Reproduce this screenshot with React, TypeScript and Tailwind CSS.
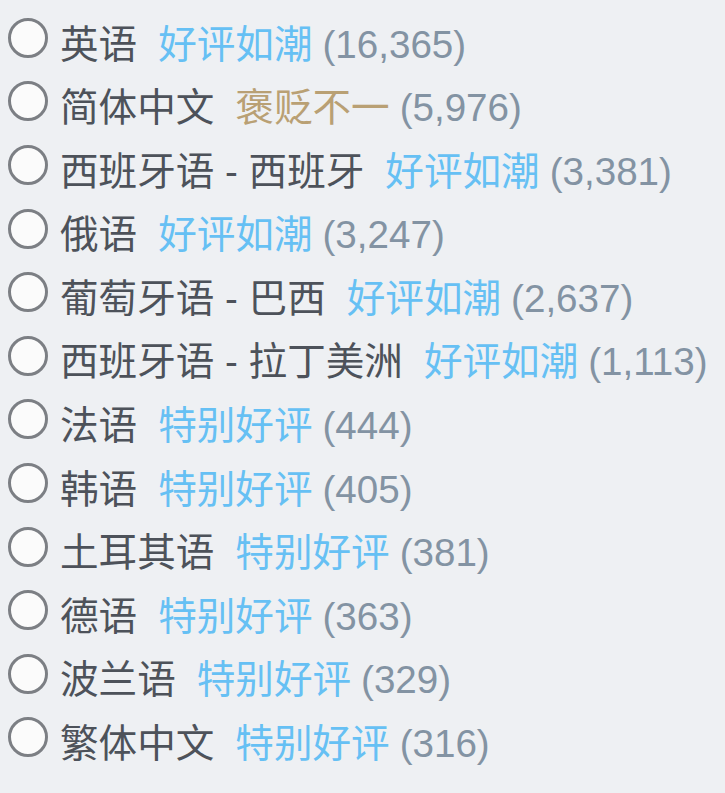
const rows: { lang: string; rating: string; tone: "pos" | "mixed"; count: string }[] = [
  { lang: "英语", rating: "好评如潮", tone: "pos", count: "16,365" },
  { lang: "简体中文", rating: "褒贬不一", tone: "mixed", count: "5,976" },
  { lang: "西班牙语 - 西班牙", rating: "好评如潮", tone: "pos", count: "3,381" },
  { lang: "俄语", rating: "好评如潮", tone: "pos", count: "3,247" },
  { lang: "葡萄牙语 - 巴西", rating: "好评如潮", tone: "pos", count: "2,637" },
  { lang: "西班牙语 - 拉丁美洲", rating: "好评如潮", tone: "pos", count: "1,113" },
  { lang: "法语", rating: "特别好评", tone: "pos", count: "444" },
  { lang: "韩语", rating: "特别好评", tone: "pos", count: "405" },
  { lang: "土耳其语", rating: "特别好评", tone: "pos", count: "381" },
  { lang: "德语", rating: "特别好评", tone: "pos", count: "363" },
  { lang: "波兰语", rating: "特别好评", tone: "pos", count: "329" },
  { lang: "繁体中文", rating: "特别好评", tone: "pos", count: "316" },
];

export default function App() {
  return (
    <div
      className="min-h-[793px] w-[725px] bg-[#eef0f3] pt-[13px]"
      style={{ fontFamily: '"Liberation Sans", "Noto Sans CJK SC", Arial, sans-serif' }}
    >
      {rows.map((r) => (
        <label key={r.lang} className="flex h-[63.6px] items-center whitespace-pre text-[38.6px] leading-none">
          <span className="ml-[8px] mr-[12px] -mt-[14px] h-[40px] w-[40px] shrink-0 rounded-full border-[3px] border-[#7c7f84] bg-[#fbfbfb]" />
          <span className="text-[#4d525a]">{r.lang}</span>
          <span className={`ml-[21px] ${r.tone === "pos" ? "text-[#66c0f4]" : "text-[#b9a074]"}`}>
            {r.rating}
          </span>
          <span className="ml-[10px] text-[#8393a3]">({r.count})</span>
        </label>
      ))}
    </div>
  );
}
